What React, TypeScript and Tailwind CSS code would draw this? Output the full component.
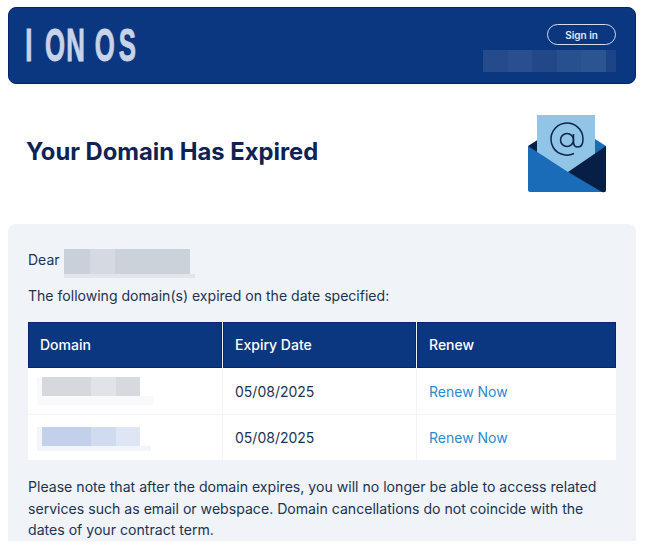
import React from "react";

const font = { fontFamily: '"Inter", "Liberation Sans", sans-serif' };

function Smudge({ blocks, h }: { blocks: [number, string][]; h: string }) {
  return (
    <div className={`flex ${h}`}>
      {blocks.map(([w, c], i) => (
        <div key={i} style={{ width: w, backgroundColor: c }} />
      ))}
    </div>
  );
}

function EnvelopeIcon() {
  return (
    <svg width="80" height="80" viewBox="0 0 80 80" className="block">
      <path d="M1 32 L12 25 L12 50 Z" fill="#071f45" />
      <path d="M68 25 L79 32 L79 45 L68 50 Z" fill="#1a6bb8" />
      <rect x="10" y="1" width="58" height="60" fill="#90c5e8" />
      <path d="M1 32 L41 58 L79 78 L3 78 Q1 78 1 76 Z" fill="#1a6bb8" />
      <path d="M79 32 L79 76 Q79 79 75 78 L41 58 Z" fill="#071f45" />
      <circle cx="40" cy="26" r="6.5" fill="none" stroke="#0f2445" strokeWidth="1.5" />
      <path d="M46.5 20 V28 Q46.5 33 51 33 Q56 33 56 25 A16 16 0 1 0 47 39.5" fill="none" stroke="#0f2445" strokeWidth="1.5" />
    </svg>
  );
}

export default function App() {
  return (
    <div className="h-[551px] overflow-hidden bg-white pl-2 pr-[10px] pt-[7px] text-[#1c3354]" style={font}>
      {/* HEADER */}
      <div className="flex h-[77px] items-start justify-between rounded-lg border border-[#08246b] bg-[#0a3780] pl-[18px] pr-[19px]">
        <svg width="120" height="54" className="mt-[11px] block overflow-visible">
          <text
            x="-3 32 70 121 164"
            y="42"
            fontSize="46"
            fontWeight="700"
            fill="#c9d3e8"
            stroke="#c9d3e8"
            strokeWidth="1"
            transform="scale(0.56 1)"
            style={{ fontFamily: '"Liberation Sans", sans-serif' }}
          >
            IONOS
          </text>
        </svg>
        <div className="mt-4 flex flex-col items-end">
          <button className="h-[21px] w-[69px] rounded-full border-[1.5px] border-[#d5dcec] text-[10px] font-semibold leading-none text-[#e4e9f4]">
            Sign in
          </button>
          <div className="mt-[5px]">
            <Smudge
              h="h-[22px]"
              blocks={[
                [25, "#264b8c"],
                [24, "#2a4f90"],
                [25, "#234888"],
                [24, "#26508e"],
                [25, "#2c5491"],
                [10, "#1d4486"],
              ]}
            />
          </div>
        </div>
      </div>

      {/* TITLE */}
      <div className="flex h-[140px] items-center justify-between pl-[18px] pr-[29px]">
        <h1 className="mb-1 text-[23.8px] font-bold text-[#0e2353]">Your Domain Has Expired</h1>
        <EnvelopeIcon />
      </div>

      {/* CARD */}
      <div className="rounded-t-lg bg-[#f0f3f7] px-5 pt-[25px]">
        <div className="flex h-[29px] items-start">
          <span className="pt-px text-sm leading-[20px]">Dear</span>
          <div className="ml-1">
            <Smudge
              h="h-[25px]"
              blocks={[
                [26, "#c9d0d9"],
                [25, "#d4d9e2"],
                [75, "#cbd2da"],
              ]}
            />
            <div className="h-1 w-[131px] bg-[#e2e5ea]" />
          </div>
        </div>
        <p className="mt-2 text-[14.05px] leading-[20px]">The following domain(s) expired on the date specified:</p>

        <table className="mt-4 -ml-px w-[590px] table-fixed border-separate border-spacing-x-px border-spacing-y-0 text-sm">
          <thead>
            <tr className="h-[46px] text-left text-white">
              <th className="w-[194px] border border-[#08246b] bg-[#0a3780] pl-[11px] font-medium">Domain</th>
              <th className="w-[193px] border border-[#08246b] bg-[#0a3780] pl-[11px] font-medium">Expiry Date</th>
              <th className="border border-[#08246b] bg-[#0a3780] pl-[11px] font-medium">Renew</th>
            </tr>
          </thead>
          <tbody>
            <tr className="h-[47px]">
              <td className="border-b border-[#f0f3f7] bg-white pl-[9px]">
                <div className="border-l-[5px] border-[#f7f9fb]">
                  <Smudge
                    h="h-[19px]"
                    blocks={[
                      [49, "#d5d8dd"],
                      [25, "#e0e3e8"],
                      [24, "#d6d9de"],
                    ]}
                  />
                  <div className="h-[9px] w-[111px] bg-[#f8f9fb]" />
                </div>
              </td>
              <td className="border-b border-[#f0f3f7] bg-white pl-3 pt-[2px]">05/08/2025</td>
              <td className="border-b border-[#f0f3f7] bg-white pl-3 pt-[2px] text-[#2a8ad4]">Renew Now</td>
            </tr>
            <tr className="h-[45px]">
              <td className="bg-white pl-[9px] pt-[3px]">
                <div className="border-l-[5px] border-[#f3f6f9]">
                  <Smudge
                    h="h-[19px]"
                    blocks={[
                      [49, "#c3d0ec"],
                      [25, "#d0dbf0"],
                      [24, "#dee5f5"],
                    ]}
                  />
                  <div className="h-[5px] w-[109px] bg-[#f3f6f9]" />
                </div>
              </td>
              <td className="bg-white pl-3">05/08/2025</td>
              <td className="bg-white pl-3 text-[#2a8ad4]">Renew Now</td>
            </tr>
          </tbody>
        </table>

        <p className="mt-4 text-[14.1px] leading-[21.5px]">
          Please note that after the domain expires, you will no longer be able to access related services such as
          email or webspace. Domain cancellations do not coincide with the dates of your contract term.
        </p>
      </div>
    </div>
  );
}
